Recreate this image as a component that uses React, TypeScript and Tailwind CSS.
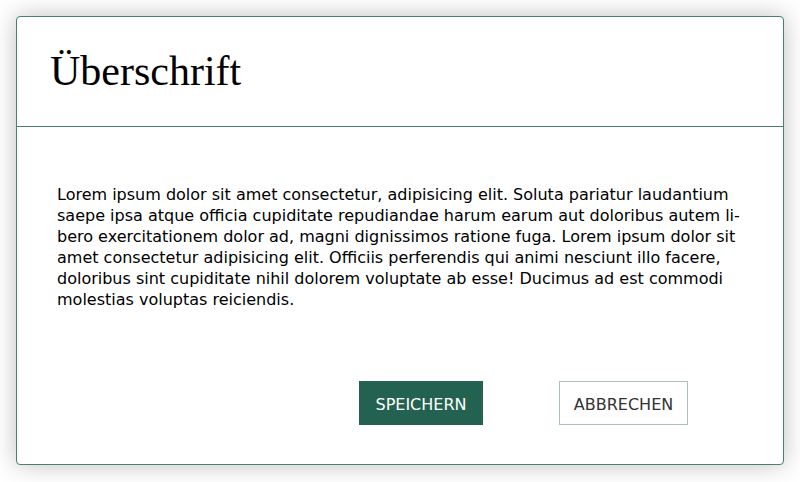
export default function App() {
    return (
        <div className="w-[800px] h-[482px] bg-white pt-4 px-4">
            <div className="w-[768px] h-[449px] flex flex-col bg-white border border-[#4d7f70] rounded-[4px] shadow-[0_0_24px_rgba(0,0,0,0.25)]">
                {/* Header */}
                <div className="h-[110px] flex items-center pl-[33px] border-b border-[#4d7f70]">
                    <h1 className="text-[42px] leading-none text-black font-['Liberation_Serif',serif] pb-[2px]">Überschrift</h1>
                </div>

                {/* Body */}
                <div className="flex-1 flex flex-col px-[40px] pt-[57px] pb-[39px]">
                    <p className="text-[16px] leading-[21px] text-black font-['DejaVu_Sans',Verdana,sans-serif] w-[690px]">
                        Lorem ipsum dolor sit amet consectetur, adipisicing elit. Soluta pariatur laudantium saepe ipsa atque officia cupiditate repudiandae harum earum aut doloribus autem li&shy;bero exercitationem dolor ad, magni dignissimos ratione fuga. Lorem ipsum dolor sit amet consectetur adipisicing elit. Officiis perferendis qui animi nesciunt illo facere, doloribus sint cupiditate nihil dolorem voluptate ab esse! Ducimus ad est commodi molestias voluptas reiciendis.
                    </p>
                    <div className="mt-auto flex pl-[302px] gap-[76px]">
                        <button className="w-[124px] h-[44px] pt-[3px] bg-[#236250] text-white text-[16px] font-['DejaVu_Sans',Verdana,sans-serif]">
                            SPEICHERN
                        </button>
                        <button className="w-[129px] h-[44px] pt-[3px] bg-white border border-[#a9c2bc] text-[#333333] text-[16px] font-['DejaVu_Sans',Verdana,sans-serif]">
                            ABBRECHEN
                        </button>
                    </div>
                </div>
            </div>
        </div>
    );
}
